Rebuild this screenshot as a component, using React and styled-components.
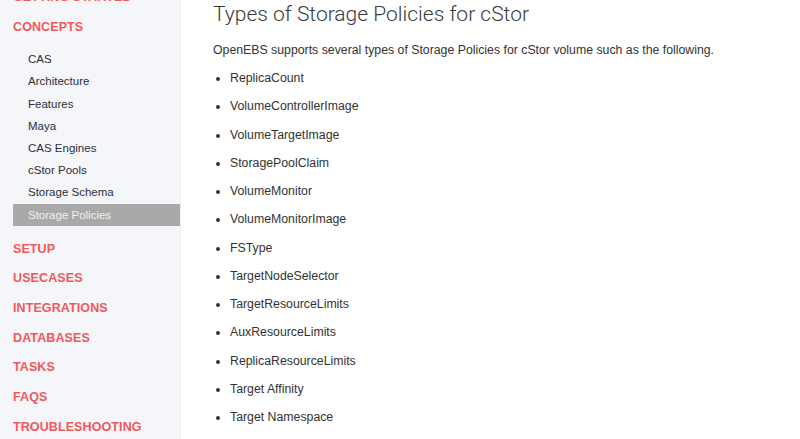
import styled, { createGlobalStyle } from "styled-components";

const GlobalStyle = createGlobalStyle`
  html, body {
    margin: 0;
    padding: 0;
    background: #fff;
    overflow: hidden;
  }
  body {
    font-family: "Liberation Sans", Arial, sans-serif;
  }
`;

const concepts = [
  "CAS",
  "Architecture",
  "Features",
  "Maya",
  "CAS Engines",
  "cStor Pools",
  "Storage Schema",
  "Storage Policies",
];

const sections = [
  "SETUP",
  "USECASES",
  "INTEGRATIONS",
  "DATABASES",
  "TASKS",
  "FAQS",
  "TROUBLESHOOTING",
];

const policies = [
  "ReplicaCount",
  "VolumeControllerImage",
  "VolumeTargetImage",
  "StoragePoolClaim",
  "VolumeMonitor",
  "VolumeMonitorImage",
  "FSType",
  "TargetNodeSelector",
  "TargetResourceLimits",
  "AuxResourceLimits",
  "ReplicaResourceLimits",
  "Target Affinity",
  "Target Namespace",
];

export default function App() {
  return (
    <>
      <GlobalStyle />
      <Page>
        <Sidebar>
          <SectionTitle>GETTING STARTED</SectionTitle>
          <SectionTitle>CONCEPTS</SectionTitle>
          <SubList>
            {concepts.map((c) => (
              <SubItem key={c} $active={c === "Storage Policies"}>
                {c}
              </SubItem>
            ))}
          </SubList>
          {sections.map((s) => (
            <SectionTitle key={s}>{s}</SectionTitle>
          ))}
        </Sidebar>
        <Content>
          <Title>Types of Storage Policies for cStor</Title>
          <Intro>
            OpenEBS supports several types of Storage Policies for cStor volume such as the following.
          </Intro>
          <Bullets>
            {policies.map((p) => (
              <li key={p}>{p}</li>
            ))}
          </Bullets>
        </Content>
      </Page>
    </>
  );
}

const Page = styled.div`
  display: flex;
  width: 800px;
  height: 439px;
  overflow: hidden;
`;

const Sidebar = styled.nav`
  width: 181px;
  flex-shrink: 0;
  background: #f5f6fa;
  border-right: 1px solid #eceef3;
  margin-top: -17px;
  padding-left: 13px;
  box-sizing: border-box;
`;

const SectionTitle = styled.div`
  height: 29.65px;
  line-height: 29.65px;
  font-size: 12.5px;
  font-weight: bold;
  color: #f2585a;
  letter-spacing: 0.1px;
`;

const SubList = styled.div`
  padding-top: 6px;
  padding-bottom: 9px;
  display: flex;
  flex-direction: column;
`;

const SubItem = styled.div`
  height: 22.2px;
  line-height: 22.2px;
  padding-left: 15px;
  font-size: 11.5px;
  color: ${(p) => (p.$active ? "#f1f1f1" : "#2c2f36")};
  background: ${(p) => (p.$active ? "#a9a9a9" : "transparent")};
`;

const Content = styled.main`
  flex: 1;
  padding-left: 32px;
  color: #333;
`;

const Title = styled.h1`
  margin: 0;
  margin-top: -2px;
  font-family: "Roboto", "Liberation Sans", sans-serif;
  font-weight: 300;
  font-size: 21px;
  line-height: 32px;
  color: #3a3a3a;
`;

const Intro = styled.p`
  margin: 11px 0 0;
  font-size: 12.3px;
  line-height: 18px;
  color: #333;
`;

const Bullets = styled.ul`
  margin: 5px 0 0;
  padding-left: 17px;
  li {
    font-size: 12.3px;
    height: 28.25px;
    line-height: 28.25px;
    color: #333;
  }
`;
